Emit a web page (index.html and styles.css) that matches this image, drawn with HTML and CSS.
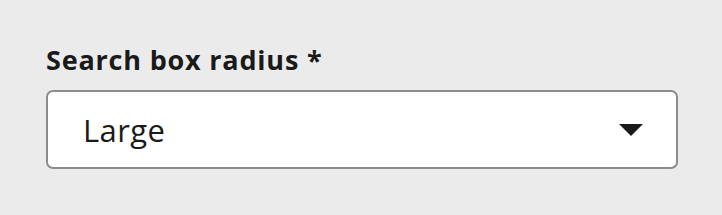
FILE: index.html
```html
<!DOCTYPE html>
<html>
<head>
<meta charset="utf-8">
<link rel="stylesheet" href="styles.css">
</head>
<body>
<div class="field">
  <label class="label">Search box radius *</label>
  <div class="select">
    <span class="value">Large</span>
    <svg class="caret" width="24" height="12" viewBox="0 0 24 12"><path d="M0 0H24L12 12Z" fill="#1a1a1a"/></svg>
  </div>
</div>
</body>
</html>
```
FILE: styles.css
```css
html, body { margin: 0; padding: 0; }
body {
  background: #ebebeb;
  width: 722px;
  height: 215px;
  font-family: "Open Sans", "Noto Sans", sans-serif;
  color: #1a1a1a;
}
.field {
  padding: 42px 44px 0 46px;
  display: flex;
  flex-direction: column;
}
.label {
  font-weight: 700;
  font-size: 27px;
  line-height: 36px;
  letter-spacing: 0.8px;
}
.select {
  margin-top: 12px;
  height: 79px;
  box-sizing: border-box;
  width: 632px;
  border: 2px solid #8c8c8c;
  border-radius: 7px;
  background: #fff;
  display: flex;
  align-items: center;
  justify-content: space-between;
  padding: 0 33px 0 35px;
}
.value {
  font-size: 31px;
  line-height: 40px;
  letter-spacing: 0.4px;
}
.caret { display: block; }
```
